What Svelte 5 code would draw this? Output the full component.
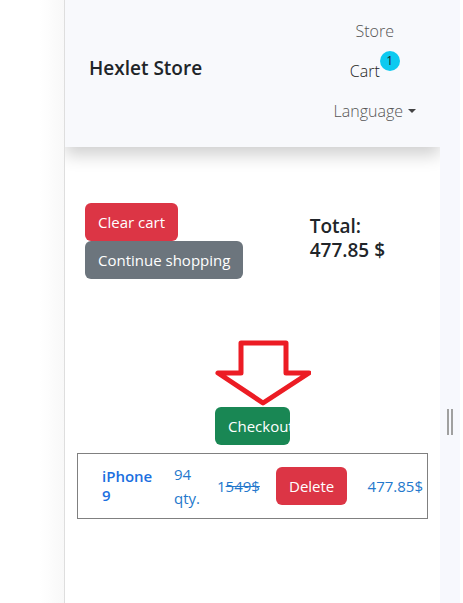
<script>
  const navigation = [
    { label: 'Store', href: '#store' },
    { label: 'Cart', href: '#cart', active: true, count: 1 }
  ];
  const items = [{ id: 9, name: 'iPhone 9', qty: 94, price: 477.85 }];
  const total = 477.85;
</script>

<div class="viewer">
  <div class="gutter"></div>
  <div class="page">
    <header>
      <a class="brand" href="#home">Hexlet Store</a>
      <nav>
        {#each navigation as link}
          <a class="link" class:active={link.active} href={link.href}>
            {link.label}{#if link.count}<span class="badge">{link.count}</span>{/if}
          </a>
        {/each}
        <button class="link language" type="button">Language<span class="caret"></span></button>
      </nav>
    </header>

    <main>
      <section class="summary">
        <div class="actions">
          <button class="btn danger" type="button">Clear cart</button>
          <button class="btn secondary" type="button">Continue shopping</button>
        </div>
        <h1>Total:<br />{total} $</h1>
      </section>

      <section class="checkout">
        <svg class="arrow" viewBox="0 0 96 68" aria-hidden="true">
          <path d="M26 4H71V34H94L48 64L3 34H26Z" />
        </svg>
        <button class="btn success" type="button">Checkout</button>
      </section>

      {#each items as item (item.id)}
        <article class="item">
          <h2>{item.name}</h2>
          <span class="qty">{item.qty} qty.</span>
          <span>1<s>549$</s></span>
          <button class="btn danger" type="button">Delete</button>
          <span class="sum">{item.price}$</span>
        </article>
      {/each}
    </main>
  </div>
  <div class="resizer"><span class="grip"></span></div>
</div>

<style>
  :global(body) {
    background: #fff;
  }
  * {
    box-sizing: border-box;
  }
  .viewer {
    display: flex;
    min-height: 100vh;
    padding-right: 3px;
    font-family: 'Segoe UI', 'Open Sans', 'Noto Sans', sans-serif;
    font-size: 15px;
    line-height: 24px;
    color: #212529;
  }
  .gutter {
    flex: 0 0 65px;
    border-right: 1px solid #dedede;
    background: linear-gradient(to right, #fff 40px, #f8f8f8);
  }
  .page {
    flex: 1;
    min-width: 0;
    overflow: hidden;
  }
  header {
    display: flex;
    align-items: center;
    justify-content: space-between;
    padding: 11px 24px 16px;
    background: #f8f9fc;
    box-shadow: 0 8px 16px rgba(0, 0, 0, 0.19);
  }
  .brand {
    padding-bottom: 6px;
    font-size: 19px;
    font-weight: 600;
    line-height: 28px;
    color: #212529;
    text-decoration: none;
  }
  nav {
    display: flex;
    flex-direction: column;
    align-items: center;
  }
  .link {
    position: relative;
    padding: 8px 0;
    border: 0;
    background: none;
    font: inherit;
    font-size: 16px;
    font-weight: 300;
    color: #555;
    text-decoration: none;
  }
  .link.active {
    padding-right: 20px;
    color: #222;
  }
  .badge {
    position: absolute;
    top: 0;
    right: 0;
    width: 20px;
    height: 20px;
    border-radius: 50%;
    background: #0dcaf0;
    font-size: 12px;
    font-weight: 400;
    line-height: 20px;
    text-align: center;
  }
  .language {
    display: flex;
    align-items: center;
    gap: 5px;
  }
  .caret {
    border: 4px solid transparent;
    border-top-color: #444;
    border-bottom: 0;
  }
  main {
    padding: 56px 12px 0;
  }
  .summary {
    display: flex;
    justify-content: space-between;
    padding: 0 43px 0 8px;
  }
  .actions {
    display: flex;
    flex-direction: column;
    align-items: flex-start;
  }
  .btn {
    height: 38px;
    padding: 0 13px;
    border: 0;
    border-radius: 6px;
    font: inherit;
    color: #fff;
    white-space: nowrap;
  }
  .danger {
    background: #dc3545;
  }
  .secondary {
    background: #6c757d;
  }
  .success {
    width: 75px;
    overflow: hidden;
    background: #198754;
    text-align: left;
  }
  h1 {
    margin: 11px 0 0;
    font-size: 19px;
    font-weight: 600;
    line-height: 24px;
  }
  .checkout {
    display: flex;
    flex-direction: column;
    align-items: flex-start;
    margin: 60px 0 8px 138px;
  }
  .arrow {
    width: 96px;
    height: 68px;
    fill: #fff;
    stroke: #ec1c24;
    stroke-width: 5;
    stroke-linejoin: round;
  }
  .item {
    display: grid;
    grid-template-columns: 56px 27px 43px 71px 1fr;
    column-gap: 16px;
    align-items: center;
    height: 66px;
    padding: 0 4px 0 24px;
    border: 1px solid #808080;
    color: #2478cc;
  }
  h2 {
    margin: 0;
    font-size: 15px;
    font-weight: 600;
    line-height: 19px;
    color: #1b6fe0;
  }
  .sum {
    text-align: right;
  }
  .resizer {
    flex: 0 0 20px;
    display: flex;
    justify-content: center;
    padding-top: 409px;
    background: #f7f8fd;
  }
  .grip {
    width: 6px;
    height: 26px;
    border: solid #a0a0a0;
    border-width: 0 2px;
  }
</style>
